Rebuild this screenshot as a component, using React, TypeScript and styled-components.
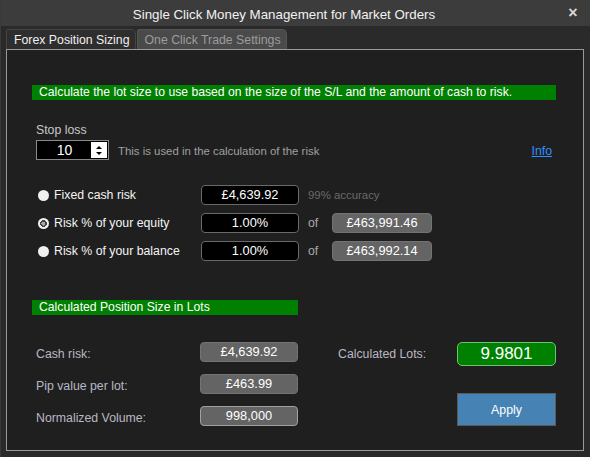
import styled, { createGlobalStyle } from 'styled-components';

const GlobalStyle = createGlobalStyle`
  html, body {
    margin: 0;
    padding: 0;
    background: #2a2a2a;
  }
  * {
    box-sizing: border-box;
  }
`;

const riskOptions = [
  { label: 'Fixed cash risk', value: '£4,639.92', note: '99% accuracy', selected: false },
  { label: 'Risk % of your equity', value: '1.00%', of: '£463,991.46', selected: true },
  { label: 'Risk % of your balance', value: '1.00%', of: '£463,992.14', selected: false },
];

const results = [
  { label: 'Cash risk:', value: '£4,639.92' },
  { label: 'Pip value per lot:', value: '£463.99' },
  { label: 'Normalized Volume:', value: '998,000', strong: true },
];

const App = () => {
  return (
    <Window>
      <GlobalStyle />
      <TitleBar>
        <Title>Single Click Money Management for Market Orders</Title>
        <Close>×</Close>
      </TitleBar>
      <Tabs>
        <Tab $active>Forex Position Sizing</Tab>
        <Tab>One Click Trade Settings</Tab>
      </Tabs>
      <Panel>
        <Banner $width={524}>Calculate the lot size to use based on the size of the S/L and the amount of cash to risk.</Banner>

        <StopLossBlock>
          <FieldLabel>Stop loss</FieldLabel>
          <StopLossRow>
            <Spinner>
              <SpinValue>10</SpinValue>
              <SpinButtons>
                <Arrow $up />
                <Arrow />
              </SpinButtons>
            </Spinner>
            <Hint>This is used in the calculation of the risk</Hint>
            <InfoLink href="#">Info</InfoLink>
          </StopLossRow>
        </StopLossBlock>

        <RiskList>
          {riskOptions.map((opt) => (
            <RiskRow key={opt.label}>
              <RadioLabel>
                <Radio $selected={opt.selected} />
                {opt.label}
              </RadioLabel>
              <InputBox>{opt.value}</InputBox>
              {opt.note && <Note>{opt.note}</Note>}
              {opt.of && (
                <>
                  <OfText>of</OfText>
                  <ReadBox $width={100}>{opt.of}</ReadBox>
                </>
              )}
            </RiskRow>
          ))}
        </RiskList>

        <Banner $width={266}>Calculated Position Size in Lots</Banner>

        <Results>
          <ResultList>
            {results.map((r) => (
              <ResultRow key={r.label}>
                <ResultLabel>{r.label}</ResultLabel>
                <ReadBox $width={98} $strong={r.strong}>{r.value}</ReadBox>
              </ResultRow>
            ))}
          </ResultList>
          <LotsColumn>
            <LotsRow>
              <ResultLabel>Calculated Lots:</ResultLabel>
              <LotsBox>9.9801</LotsBox>
            </LotsRow>
            <ApplyButton>Apply</ApplyButton>
          </LotsColumn>
        </Results>
      </Panel>
    </Window>
  );
};

const Window = styled.div`
  width: 590px;
  height: 457px;
  background: #2a2a2a;
  font-family: 'Liberation Sans', Arial, sans-serif;
  font-size: 12.3px;
  color: #fff;
  display: flex;
  flex-direction: column;
  border-left: 1px solid #3a3a3a;
  overflow: hidden;
`;

const TitleBar = styled.div`
  height: 26px;
  background: #3c3c3c;
  display: flex;
  align-items: center;
`;

const Title = styled.div`
  flex: 1;
  text-align: center;
  font-size: 13.3px;
  color: #f2f2f2;
  padding-top: 2px;
`;

const Close = styled.div`
  width: 12px;
  margin-right: 11px;
  font-size: 16px;
  font-weight: bold;
  color: #d8d8d8;
  text-align: center;
`;

const Tabs = styled.div`
  display: flex;
  align-items: flex-end;
  padding: 3px 0 0 5px;
  height: 23px;
`;

const Tab = styled.div<{ $active?: boolean }>`
  height: 20px;
  padding: 0 5px 0 7px;
  display: flex;
  align-items: center;
  font-size: 12.3px;
  color: ${(p) => (p.$active ? '#f0f0f0' : '#9c9c9c')};
  background: ${(p) => (p.$active ? '#2e2e2e' : '#4a4a4a')};
  border: 1px solid ${(p) => (p.$active ? '#444' : '#555')};
  border-bottom: none;
  border-radius: 2px 5px 0 0;
  margin-right: 1px;
`;

const Panel = styled.div`
  margin: 0 6px 6px 5px;
  flex: 1;
  background: #1f1f1f;
  border: 1px solid #9a9a9a;
  display: flex;
  flex-direction: column;
  padding: 35px 0 0 25px;
`;

const Banner = styled.div<{ $width: number }>`
  width: ${(p) => p.$width}px;
  height: 15px;
  background: #008000;
  color: #fff;
  font-size: 12.2px;
  line-height: 15px;
  padding-left: 7px;
  white-space: nowrap;
`;

const StopLossBlock = styled.div`
  margin-top: 23px;
  padding-left: 4px;
  display: flex;
  flex-direction: column;
  gap: 2px;
`;

const FieldLabel = styled.div`
  color: #c8c8c8;
  line-height: 15px;
`;

const StopLossRow = styled.div`
  display: flex;
  align-items: center;
  width: 516px;
`;

const Spinner = styled.div`
  width: 73px;
  height: 20px;
  border: 1px solid #8a8a8a;
  background: #000;
  display: flex;
  padding: 1px;
`;

const SpinValue = styled.div`
  flex: 1;
  text-align: center;
  color: #fff;
  font-size: 14px;
  line-height: 16px;
`;

const SpinButtons = styled.div`
  width: 16px;
  background: #fff;
  display: flex;
  flex-direction: column;
  align-items: center;
  justify-content: center;
  gap: 3px;
`;

const Arrow = styled.div<{ $up?: boolean }>`
  width: 0;
  height: 0;
  border-left: 3px solid transparent;
  border-right: 3px solid transparent;
  ${(p) => (p.$up ? 'border-bottom: 3px solid #000;' : 'border-top: 3px solid #000;')}
`;

const Hint = styled.div`
  margin-left: 9px;
  color: #a0a0a0;
  font-size: 11.4px;
  flex: 1;
  padding-top: 1px;
`;

const InfoLink = styled.a`
  color: #2f8fff;
  text-decoration: underline;
  padding-top: 1px;
`;

const RiskList = styled.div`
  margin-top: 25px;
  display: flex;
  flex-direction: column;
  gap: 8px;
  margin-bottom: 39px;
`;

const RiskRow = styled.div`
  display: flex;
  align-items: center;
  height: 20px;
  padding-left: 6px;
`;

const RadioLabel = styled.label`
  width: 163px;
  display: flex;
  align-items: center;
  gap: 5px;
  color: #f4f4f4;
`;

const Radio = styled.span<{ $selected?: boolean }>`
  width: 11px;
  height: 11px;
  border-radius: 50%;
  background: ${(p) =>
    p.$selected
      ? 'radial-gradient(circle, #a8a8a8 0 2px, #444 2px 3.5px, #f0f0f0 3.5px)'
      : '#f0f0f0'};
  display: inline-block;
`;

const InputBox = styled.div`
  width: 98px;
  height: 20px;
  background: #000;
  border: 1px solid #6a6a6a;
  border-radius: 4px;
  text-align: center;
  line-height: 18px;
  font-size: 12.8px;
  color: #fff;
`;

const Note = styled.div`
  margin-left: 9px;
  color: #6a6a6a;
  font-size: 11.4px;
`;

const OfText = styled.div`
  margin-left: 9px;
  width: 24px;
  color: #a8a8a8;
`;

const ReadBox = styled.div<{ $width: number; $strong?: boolean }>`
  width: ${(p) => p.$width}px;
  height: 20px;
  background: #646464;
  border: 1px solid ${(p) => (p.$strong ? '#a0a0a0' : '#737373')};
  border-radius: 4px;
  text-align: center;
  line-height: 18px;
  font-size: 12.8px;
  color: #fff;
`;

const Results = styled.div`
  margin-top: 27px;
  display: flex;
`;

const ResultList = styled.div`
  display: flex;
  flex-direction: column;
  gap: 12px;
  padding-left: 4px;
`;

const ResultRow = styled.div`
  display: flex;
  align-items: center;
`;

const ResultLabel = styled.div`
  width: 164px;
  color: #b8b8c4;
  padding-top: 4px;
`;

const LotsColumn = styled.div`
  margin-left: 40px;
  display: flex;
  flex-direction: column;
  align-items: flex-end;
  gap: 27px;
`;

const LotsRow = styled.div`
  display: flex;
  align-items: center;
  ${ResultLabel} {
    width: 119px;
    padding-top: 0;
  }
`;

const LotsBox = styled.div`
  width: 99px;
  height: 24px;
  background: #008000;
  border: 1px solid #6cc36c;
  border-radius: 5px;
  text-align: center;
  line-height: 22px;
  font-size: 17px;
  color: #fff;
`;

const ApplyButton = styled.button`
  width: 99px;
  height: 33px;
  background: #4682b4;
  border: 1px solid #5a5a5a;
  color: #fff;
  font-family: inherit;
  font-size: 12.3px;
  padding: 0;
`;

export default App;
